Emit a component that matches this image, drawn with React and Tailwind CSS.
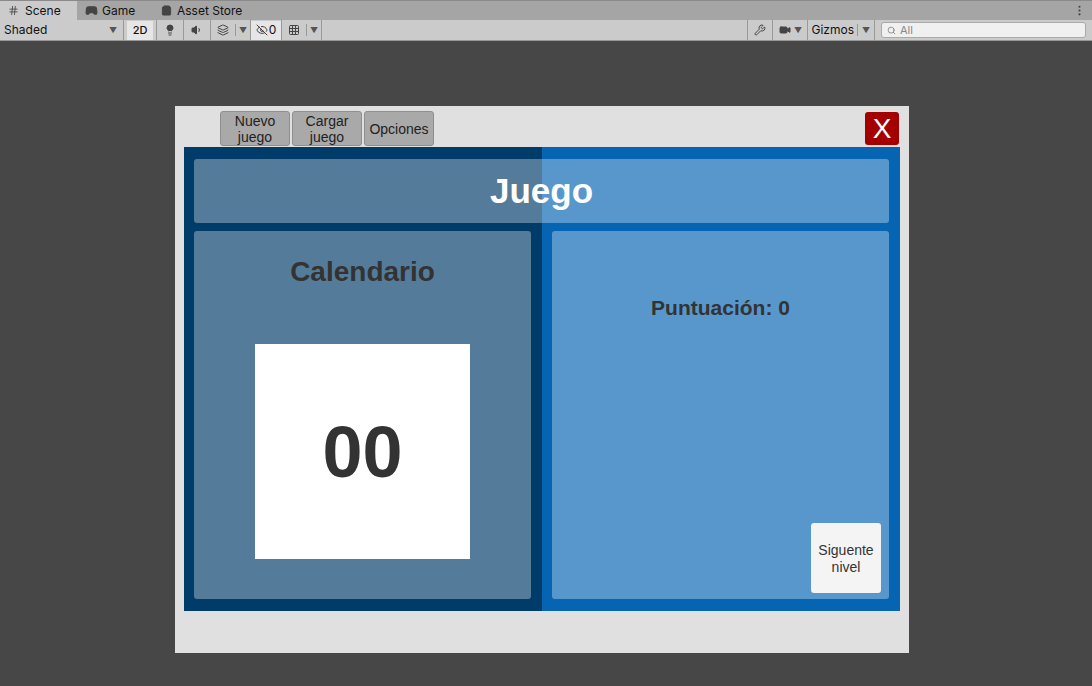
import React from "react";
import {
  Hash,
  Gamepad2,
  ShoppingBag,
  Lightbulb,
  Volume1,
  Layers,
  EyeOff,
  Grid3x3,
  Wrench,
  Video,
  Search,
  MoreVertical,
} from "lucide-react";

const ui = { fontFamily: "Inter, 'Liberation Sans', sans-serif" };
const game = { fontFamily: "'Liberation Sans', Arial, sans-serif" };

function Caret() {
  return <span className="text-[8px] leading-none text-[#555]">▼</span>;
}

function Sep() {
  return <div className="h-full w-px bg-[#999]" />;
}

function Toolbar() {
  return (
    <div style={ui} className="text-[12px] text-[#111]">
      {/* Tabs */}
      <div className="flex h-[20px] items-end border-t border-[#8a8a8a] bg-[#a5a5a5]">
        <div className="flex h-full w-[77px] items-center gap-[6px] bg-[#cbcbcb] pl-[8px]">
          <Hash size={11} strokeWidth={1.6} className="text-[#333]" />
          <span>Scene</span>
        </div>
        <div className="flex h-full w-[78px] items-center gap-[4px] pl-[8px]">
          <Gamepad2 size={13} className="fill-[#444] text-[#444]" />
          <span>Game</span>
        </div>
        <div className="flex h-full items-center gap-[5px] pl-[6px]">
          <ShoppingBag size={11} className="fill-[#444] text-[#444]" />
          <span>Asset Store</span>
        </div>
        <div className="ml-auto flex h-full items-center pr-[6px]">
          <MoreVertical size={13} className="text-[#444]" />
        </div>
      </div>
      {/* Tools row */}
      <div className="flex h-[21px] items-center border-b border-[#999] bg-[#cbcbcb]">
        <div className="flex h-full w-[123px] items-center justify-between pl-[4px] pr-[6px]">
          <span>Shaded</span>
          <Caret />
        </div>
        <Sep />
        <div className="mx-[3px] flex h-[19px] w-[26px] items-center justify-center bg-[#e6e6e6] text-[11px] font-medium">
          2D
        </div>
        <Sep />
        <div className="flex h-full w-[26px] items-center justify-center">
          <Lightbulb size={12} className="fill-[#444] text-[#444]" />
        </div>
        <Sep />
        <div className="flex h-full w-[26px] items-center justify-center">
          <Volume1 size={12} className="fill-[#444] text-[#444]" />
        </div>
        <Sep />
        <div className="flex h-full w-[24px] items-center justify-center">
          <Layers size={12} className="text-[#444]" />
        </div>
        <div className="h-[12px] w-px bg-[#999]" />
        <div className="flex h-full w-[14px] items-center justify-center">
          <Caret />
        </div>
        <Sep />
        <div className="flex h-[19px] w-[30px] items-center justify-center gap-[1px] bg-[#e6e6e6]">
          <EyeOff size={12} className="text-[#444]" />
          <span>0</span>
        </div>
        <Sep />
        <div className="flex h-full w-[24px] items-center justify-center">
          <Grid3x3 size={12} className="text-[#444]" />
        </div>
        <div className="h-[12px] w-px bg-[#999]" />
        <div className="flex h-full w-[14px] items-center justify-center">
          <Caret />
        </div>
        <Sep />

        <div className="ml-auto flex h-full items-center">
          <Sep />
          <div className="flex h-full w-[24px] items-center justify-center">
            <Wrench size={12} className="text-[#444]" />
          </div>
          <Sep />
          <div className="flex h-full w-[34px] items-center justify-center gap-[3px]">
            <Video size={12} className="fill-[#444] text-[#444]" />
            <Caret />
          </div>
          <Sep />
          <div className="flex h-full items-center px-[3px]">Gizmos</div>
          <div className="h-[12px] w-px bg-[#999]" />
          <div className="flex h-full w-[16px] items-center justify-center">
            <Caret />
          </div>
          <Sep />
          <div className="mx-[6px] flex h-[16px] w-[205px] items-center gap-[4px] rounded-[3px] border border-[#aaa] bg-[#f0f0f0] pl-[5px] text-[11px] text-[#888]">
            <Search size={9} className="text-[#777]" />
            <span>All</span>
          </div>
        </div>
      </div>
    </div>
  );
}

function TabButton({ children }) {
  return (
    <button
      style={game}
      className="flex h-[35px] w-[70px] items-center justify-center rounded-[3px] border border-[#8f8f8f] bg-[#a9a9a9] text-center text-[14px] leading-[16px] text-[#222]"
    >
      {children}
    </button>
  );
}

function GamePanel() {
  return (
    <div className="flex h-[547px] w-[734px] flex-col bg-[#e0e0e0]">
      <div className="flex items-start pl-[45px] pr-[10px] pt-[5px]">
        <div className="flex gap-[2px]">
          <TabButton>
            Nuevo
            <br />
            juego
          </TabButton>
          <TabButton>
            Cargar
            <br />
            juego
          </TabButton>
          <TabButton>Opciones</TabButton>
        </div>
        <button
          style={game}
          className="ml-auto mt-[1px] flex h-[33px] w-[34px] items-center justify-center rounded-[3px] bg-[#a40000] text-[28px] leading-none text-white"
        >
          X
        </button>
      </div>

      <div
        style={game}
        className="mx-[9px] mt-[1px] flex h-[464px] flex-col gap-[8px] bg-[linear-gradient(to_right,#003c69_50%,#0665b2_50%)] pb-[12px] pl-[10px] pr-[11px] pt-[12px]"
      >
        <div className="flex h-[64px] items-center justify-center rounded-[3px] bg-white/[0.33] text-[35px] font-bold text-white">
          Juego
        </div>
        <div className="flex flex-1 gap-[21px]">
          <div className="flex flex-1 flex-col items-center rounded-[3px] bg-white/[0.33]">
            <div className="mt-[20px] text-[28px] font-bold text-[#333]">Calendario</div>
            <div className="mt-[51px] flex h-[215px] w-[215px] items-center justify-center bg-white">
              <span className="text-[72px] font-bold leading-none text-[#333]">00</span>
            </div>
          </div>
          <div className="flex flex-1 flex-col items-center rounded-[3px] bg-white/[0.33]">
            <div className="mt-[61px] text-[21px] font-bold text-[#333]">Puntuación: 0</div>
            <div className="mb-[6px] mr-[8px] mt-auto flex h-[70px] w-[70px] items-center justify-center self-end rounded-[3px] bg-[#f4f4f4] pt-[2px] text-center text-[14px] leading-[17px] text-[#333]">
              Siguente
              <br />
              nivel
            </div>
          </div>
        </div>
      </div>
    </div>
  );
}

export default function App() {
  return (
    <div className="flex h-[686px] w-[1092px] flex-col overflow-hidden bg-[#474747]">
      <Toolbar />
      <div className="flex-1 pl-[175px] pt-[65px]">
        <GamePanel />
      </div>
    </div>
  );
}
